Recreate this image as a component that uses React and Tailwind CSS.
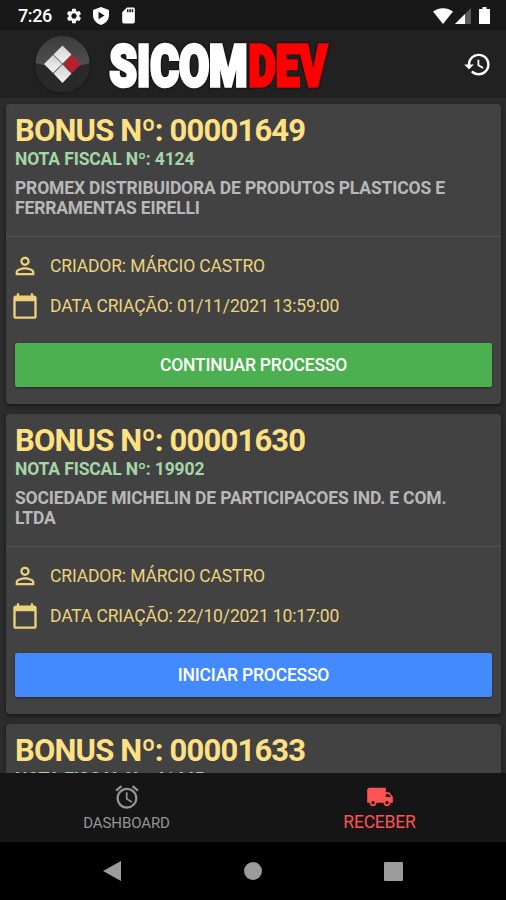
import {
  MdAlarm,
  MdCalendarToday,
  MdHistory,
  MdLocalShipping,
  MdPersonOutline,
  MdSdCard,
  MdSettings,
} from "react-icons/md";

const bonusList = [
  {
    number: "00001649",
    invoice: "4124",
    company: "PROMEX DISTRIBUIDORA DE PRODUTOS PLASTICOS E FERRAMENTAS EIRELLI",
    creator: "MÁRCIO CASTRO",
    createdAt: "01/11/2021 13:59:00",
    started: true,
  },
  {
    number: "00001630",
    invoice: "19902",
    company: "SOCIEDADE MICHELIN DE PARTICIPACOES IND. E COM. LTDA",
    creator: "MÁRCIO CASTRO",
    createdAt: "22/10/2021 10:17:00",
    started: false,
  },
  {
    number: "00001633",
    invoice: "41445",
  },
];

const StatusBar = () => (
  <div className="flex h-[30px] shrink-0 items-center justify-between bg-[#181818] pl-[18px] pr-[16px] pt-px text-white">
    <div className="flex items-center">
      <span className="w-[47px] text-[18px] font-medium leading-none tracking-[-0.4px]">
        7:26
      </span>
      <MdSettings className="mr-[10px] size-[18px]" />
      <svg viewBox="0 0 16 18" className="mr-[10px] h-[18px] w-4">
        <path
          fill="currentColor"
          fillRule="evenodd"
          d="M8 0l8 3v5c0 5-3.400 8.500-8 10C3.400 16.500 0 13 0 8V3zM5.500 4.800v7.400l6-3.700z"
        />
      </svg>
      <MdSdCard className="size-[19px]" />
    </div>
    <div className="flex items-center">
      <svg viewBox="0 0 20 16" className="mr-[2px] h-4 w-5">
        <path fill="currentColor" d="M0 3.500C6-1 14-1 20 3.500L10 16z" />
      </svg>
      <svg viewBox="0 0 16 16" className="mr-[8px] size-4">
        <path fill="#5c5c5c" d="M16 0v16H0z" />
        <path fill="currentColor" d="M10 6v10H0z" />
      </svg>
      <svg viewBox="0 0 11 17" className="h-[17px] w-[11px]">
        <path fill="currentColor" d="M3.500 0h4v2H11v15H0V2h3.500z" />
      </svg>
    </div>
  </div>
);

const Logo = () => (
  <svg viewBox="0 0 300 68" className="h-[68px] w-[300px]">
    <defs>
      <linearGradient id="ball" x1="0" y1="0" x2="0" y2="1">
        <stop offset="0" stopColor="#3c3c3c" />
        <stop offset="1" stopColor="#505050" />
      </linearGradient>
      <linearGradient id="tile" x1="0" y1="0" x2="0" y2="1">
        <stop offset="0" stopColor="#d2d2d2" />
        <stop offset="1" stopColor="#f4f4f4" />
      </linearGradient>
    </defs>
    <circle cx="29.500" cy="35" r="29" fill="#1b1b1b" />
    <circle cx="29.500" cy="35" r="27.500" fill="#292929" />
    <path d="M2.500 33a27 27 0 0 1 54 0q-27 8-54 0z" fill="url(#ball)" />
    {/* four rotated tiles, the right one is red */}
    <path d="M29.500 15.500l9 9-9 9-9-9z" fill="url(#tile)" />
    <path d="M20 25l9 9-9 9-9-9z" fill="url(#tile)" />
    <path d="M29.500 34.500l9 9-9 9.500-9-9.500z" fill="url(#tile)" />
    <path d="M39 25l9 9-9 9-9-9z" fill="#b3222f" />
    <g
      fontFamily="Roboto"
      fontWeight="900"
      fontSize="57"
      strokeWidth="3.600"
      className="drop-shadow-[0_0_1px_#000]"
    >
      <text
        x="76.500"
        y="55.500"
        textLength="138"
        lengthAdjust="spacingAndGlyphs"
        fill="#ffffff"
        stroke="#ffffff"
      >
        SICOM
      </text>
      <text
        x="215.500"
        y="55.500"
        textLength="78.500"
        lengthAdjust="spacingAndGlyphs"
        fill="#ff0000"
        stroke="#ff0000"
      >
        DEV
      </text>
    </g>
  </svg>
);

const Header = () => (
  <header className="flex h-[68px] shrink-0 items-center justify-between bg-[#212121] pl-[33px] pr-[14px]">
    <Logo />
    <MdHistory className="size-[29px] text-white" />
  </header>
);

const BonusCard = ({ bonus }) => (
  <div className="h-[300px] shrink-0 rounded bg-[#424242] shadow-[0_2px_4px_rgba(0,0,0,0.5)]">
    <div className="h-[133px] border-b border-[#525252] px-[9px] pt-[9px] font-bold">
      <h2 className="text-[31px] leading-[35px] tracking-[-0.82px] text-[#ffe082]">
        BONUS Nº: {bonus.number}
      </h2>
      <h3 className="mt-px text-[17.5px] leading-5 tracking-[-0.14px] text-[#a5d6a7]">
        NOTA FISCAL Nº: {bonus.invoice}
      </h3>
      <p className="mt-[9px] pr-5 text-[17.5px] leading-5 tracking-[-0.16px] text-[#b8b8b8]">
        {bonus.company}
      </p>
    </div>

    {bonus.creator && (
      <div className="flex flex-col px-[9px] pt-[9px] text-[17.5px] tracking-[-0.14px] text-[#ecd27c]">
        <div className="flex h-10 items-center">
          <MdPersonOutline className="-ml-1 mr-[11px] size-7" />
          CRIADOR: {bonus.creator}
        </div>
        <div className="flex h-10 items-center">
          <MdCalendarToday className="-ml-1 mr-[11px] size-7" />
          DATA CRIAÇÃO: {bonus.createdAt}
        </div>
        <button
          className={`mt-[17px] h-11 rounded-xs pt-px text-[17.5px] font-medium tracking-[-0.2px] text-white shadow-[0_1px_3px_rgba(0,0,0,0.4)] ${
            bonus.started ? "bg-[#4caf50]" : "bg-[#448aff]"
          }`}
        >
          {bonus.started ? "CONTINUAR PROCESSO" : "INICIAR PROCESSO"}
        </button>
      </div>
    )}
  </div>
);

const TabBar = () => (
  <nav className="grid h-[69px] shrink-0 grid-cols-2 bg-[#151515]">
    <div className="flex flex-col items-center pt-[10px] text-[#949494]">
      <MdAlarm className="size-7" />
      <span className="mt-[3px] text-[15px] leading-[18px] tracking-[-0.1px]">
        DASHBOARD
      </span>
    </div>
    <div className="flex flex-col items-center pt-[10px] text-[#ff5252]">
      <MdLocalShipping className="ml-px size-7" />
      <span className="mt-px text-[17.5px] leading-5 tracking-[-0.2px]">
        RECEBER
      </span>
    </div>
  </nav>
);

const SystemNav = () => (
  <div className="flex h-[58px] shrink-0 items-center justify-between bg-black px-[103px]">
    <svg viewBox="0 0 18 20" className="h-5 w-[18px]">
      <path fill="#9b9b9b" d="M18 0v20L0 10z" />
    </svg>
    <div className="size-[18px] rounded-full bg-[#9b9b9b]" />
    <div className="size-[19px] rounded-[1px] bg-[#9b9b9b]" />
  </div>
);

export default function App() {
  return (
    <div className="flex h-[900px] w-[506px] flex-col overflow-hidden bg-[#2c2c2c] font-[Roboto,sans-serif]">
      <StatusBar />
      <Header />
      <main className="flex min-h-0 flex-1 flex-col gap-[10px] overflow-hidden pl-[6px] pr-[5px] pt-[6px]">
        {bonusList.map((bonus) => (
          <BonusCard key={bonus.number} bonus={bonus} />
        ))}
      </main>
      <TabBar />
      <SystemNav />
    </div>
  );
}
